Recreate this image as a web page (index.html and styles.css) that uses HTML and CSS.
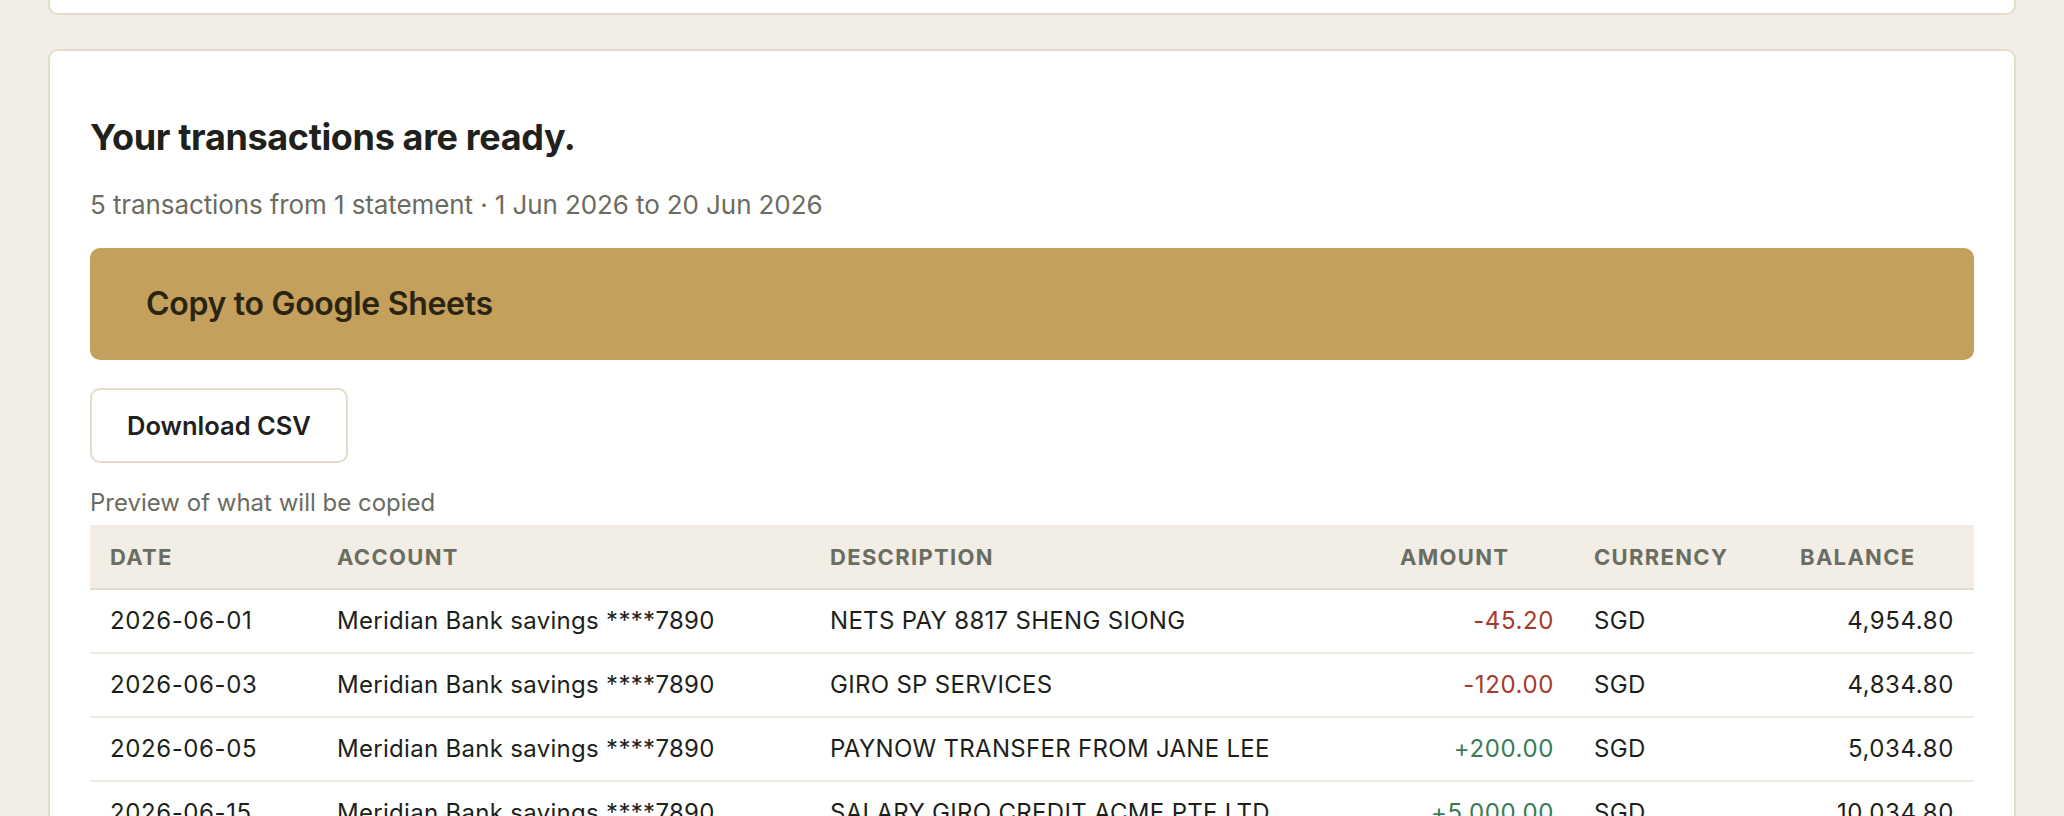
FILE: index.html
```html
<!DOCTYPE html>
<html lang="en">
<head>
<meta charset="utf-8">
<title>Your transactions are ready</title>
<link rel="stylesheet" href="styles.css">
</head>
<body>
<main class="page">
  <div class="card card-top"></div>
  <section class="card result">
    <h2 class="title">Your transactions are ready.</h2>
    <p class="summary">5 transactions from 1 statement · 1 Jun 2026 to 20 Jun 2026</p>
    <button class="btn btn-primary" type="button">Copy to Google Sheets</button>
    <div class="secondary-row">
      <button class="btn btn-secondary" type="button">Download CSV</button>
    </div>
    <p class="preview-label">Preview of what will be copied</p>
    <table class="tx-table">
      <colgroup>
        <col class="c-date">
        <col class="c-account">
        <col class="c-desc">
        <col class="c-amount">
        <col class="c-currency">
        <col class="c-balance">
      </colgroup>
      <thead>
        <tr>
          <th>Date</th>
          <th>Account</th>
          <th>Description</th>
          <th>Amount</th>
          <th>Currency</th>
          <th>Balance</th>
        </tr>
      </thead>
      <tbody>
        <tr>
          <td class="digits">2026-06-01</td>
          <td>Meridian Bank savings ****7890</td>
          <td>NETS PAY 8817 SHENG SIONG</td>
          <td class="num neg">-45.20</td>
          <td>SGD</td>
          <td class="num">4,954.80</td>
        </tr>
        <tr>
          <td class="digits">2026-06-03</td>
          <td>Meridian Bank savings ****7890</td>
          <td>GIRO SP SERVICES</td>
          <td class="num neg">-120.00</td>
          <td>SGD</td>
          <td class="num">4,834.80</td>
        </tr>
        <tr>
          <td class="digits">2026-06-05</td>
          <td>Meridian Bank savings ****7890</td>
          <td>PAYNOW TRANSFER FROM JANE LEE</td>
          <td class="num pos">+200.00</td>
          <td>SGD</td>
          <td class="num">5,034.80</td>
        </tr>
        <tr>
          <td class="digits">2026-06-15</td>
          <td>Meridian Bank savings ****7890</td>
          <td>SALARY GIRO CREDIT ACME PTE LTD</td>
          <td class="num pos">+5,000.00</td>
          <td>SGD</td>
          <td class="num">10,034.80</td>
        </tr>
      </tbody>
    </table>
  </section>
</main>
</body>
</html>
```

FILE: styles.css
```css
* {
  box-sizing: border-box;
}

html, body {
  margin: 0;
  padding: 0;
}

body {
  background: #f2ede5;
  font-family: Inter, "Noto Sans", "Liberation Sans", sans-serif;
  color: #1f211c;
}

.page {
  padding: 0 48px 48px;
}

.card {
  background: #ffffff;
  border: 2px solid #e4ddcc;
  border-radius: 10px;
}

.card-top {
  height: 15px;
  border-top: none;
  border-radius: 0 0 10px 10px;
}

.result {
  margin-top: 34px;
  padding: 64px 40px 40px;
}

.title {
  margin: 0;
  font-size: 36px;
  line-height: 44px;
  font-weight: 700;
  letter-spacing: -0.01em;
  color: #1f211c;
}

.summary {
  margin: 30px 0 0;
  font-size: 26px;
  line-height: 32px;
  letter-spacing: -0.1px;
  color: #6b6c60;
}

.btn {
  font-family: inherit;
  cursor: pointer;
  border-radius: 10px;
}

.btn-primary {
  display: block;
  width: 100%;
  margin-top: 27px;
  padding: 36px 56px;
  border: none;
  background: #c4a05c;
  color: #2a2412;
  font-size: 32px;
  line-height: 40px;
  font-weight: 600;
  letter-spacing: -0.3px;
  text-align: left;
}

.secondary-row {
  display: flex;
  margin-top: 28px;
}

.btn-secondary {
  padding: 20px 35px;
  border: 2px solid #e4ddcc;
  background: #ffffff;
  color: #1f211c;
  font-size: 25.5px;
  line-height: 31px;
  font-weight: 600;
}

.preview-label {
  margin: 24px 0 6px;
  font-size: 24px;
  line-height: 32px;
  color: #6b6c60;
}

.tx-table {
  width: 100%;
  border-collapse: collapse;
  table-layout: fixed;
}

.c-date { width: 227px; }
.c-account { width: 493px; }
.c-desc { width: 570px; }
.c-amount { width: 194px; }
.c-currency { width: 206px; }
.c-balance { width: 194px; }

.tx-table th {
  background: #f2ede5;
  border-bottom: 2px solid #e3dccc;
  padding: 16px 20px;
  height: 64px;
  font-size: 22px;
  line-height: 30px;
  font-weight: 700;
  letter-spacing: 0.06em;
  text-transform: uppercase;
  text-align: left;
  color: #6a6d61;
}

.tx-table td {
  border-bottom: 2px solid #efeadf;
  padding: 16px 20px;
  height: 64px;
  font-size: 24px;
  line-height: 30px;
  letter-spacing: 0.3px;
  color: #1e1f1b;
  white-space: nowrap;
}

.tx-table td.digits,
.tx-table td.num {
  letter-spacing: 0.6px;
}

.tx-table td.num {
  text-align: right;
}

.tx-table td.neg {
  color: #a63a2b;
}

.tx-table td.pos {
  color: #3b7a55;
}
```
